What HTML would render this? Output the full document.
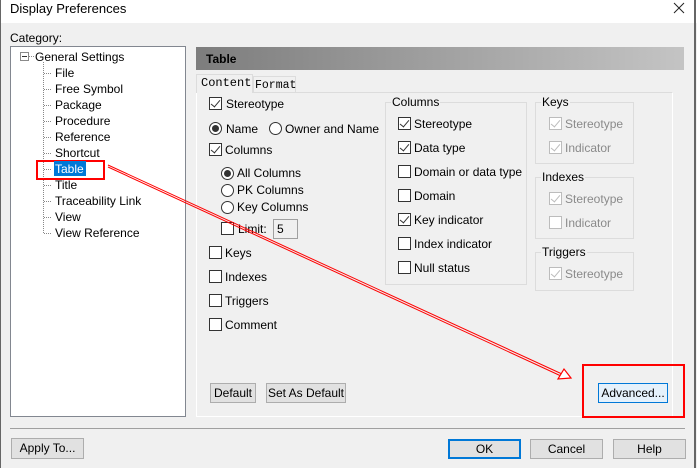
<!DOCTYPE html>
<html><head><meta charset="utf-8"><style>
*{margin:0;padding:0;box-sizing:border-box}
body{width:697px;height:468px;background:#f0f0f0;font-family:"Liberation Sans",sans-serif;font-size:12px;color:#000;position:relative;overflow:hidden}
.a{position:absolute;white-space:nowrap}
.cb{position:absolute;width:13px;height:13px;border:1px solid #333;background:#fff}
.cb.c::after{content:"";position:absolute;left:3px;top:0px;width:4px;height:8px;border:solid #333;border-width:0 1px 1px 0;transform:rotate(40deg)}
.cb.d{border-color:#bcbcbc}
.cb.d.c::after{border-color:#bcbcbc}
.rb{position:absolute;width:13px;height:13px;border:1px solid #333;border-radius:50%;background:#fff}
.rb.c::after{content:"";position:absolute;left:2px;top:2px;width:7px;height:7px;border-radius:50%;background:#333}
.g{color:#8a8a8a}
.btn{position:absolute;border:1px solid #adadad;background:#e1e1e1;text-align:center;line-height:18px}
.grp{position:absolute;border:1px solid #dcdcdc}
.gl{position:absolute;background:#f0f0f0;padding:0 1px;top:-8px;left:5px}
.t{position:absolute;left:55px}
</style></head><body>
<div class="a" style="left:0;top:0;width:697px;height:23px;background:#fff"></div>
<div class="a" style="left:0;top:0;width:1px;height:468px;background:#666"></div>
<div class="a" style="left:694px;top:0;width:2px;height:468px;background:#666"></div>
<div class="a" style="left:10px;top:1px;font-size:13px">Display Preferences</div>
<svg class="a" style="left:673px;top:2px" width="12" height="12"><path d="M1 1L11 11M11 1L1 11" stroke="#222" stroke-width="1"/></svg>
<div class="a" style="left:10px;top:31px">Category:</div>
<div class="a" style="left:10px;top:46px;width:176px;height:371px;background:#fff;border:1px solid #828790"></div>
<div class="a" style="left:20px;top:52px;width:9px;height:9px;border:1px solid #8a8a8a;background:#fff"></div>
<div class="a" style="left:22px;top:56px;width:5px;height:1px;background:#333"></div>
<div class="a" style="left:29px;top:56px;width:5px;border-top:1px dotted #888"></div>
<div class="a" style="left:43px;top:62px;height:171px;border-left:1px dotted #888"></div>
<div class="a" style="left:35px;top:50px">General Settings</div>
<div class="a" style="left:196px;top:47px;width:488px;height:23px;background:linear-gradient(90deg,#7d7d7d,#c4c4c4)"></div>
<div class="a" style="left:206px;top:52px;font-weight:bold">Table</div>
<div class="a" style="left:196px;top:92px;width:477px;height:325px;border:1px solid #fff;border-top-color:#dcdcdc"></div>
<div class="a" style="left:196px;top:74px;width:57px;height:19px;background:#f0f0f0;border:1px solid #dcdcdc;border-bottom:none"></div>
<div class="a" style="left:201px;top:76px;font-family:'Liberation Mono',monospace;font-size:12px">Content</div>
<div class="a" style="left:253px;top:76px;width:43px;height:16px;border:1px solid #dcdcdc;border-bottom:none"></div>
<div class="a" style="left:255px;top:79px;font-family:'Liberation Mono',monospace;font-size:11.5px">Format</div>

<div class="cb c" style="left:209px;top:97px"></div><div class="a" style="left:226px;top:97px">Stereotype</div>
<div class="rb c" style="left:209px;top:122px"></div><div class="a" style="left:226px;top:122px">Name</div>
<div class="rb" style="left:269px;top:122px"></div><div class="a" style="left:285px;top:122px">Owner and Name</div>
<div class="cb c" style="left:209px;top:143px"></div><div class="a" style="left:225px;top:143px">Columns</div>
<div class="rb c" style="left:221px;top:167px"></div><div class="a" style="left:237px;top:166px">All Columns</div>
<div class="rb" style="left:221px;top:184px"></div><div class="a" style="left:237px;top:183px">PK Columns</div>
<div class="rb" style="left:221px;top:201px"></div><div class="a" style="left:237px;top:200px">Key Columns</div>
<div class="cb" style="left:221px;top:222px"></div><div class="a" style="left:238px;top:222px">Limit:</div>
<div class="a" style="left:273px;top:219px;width:25px;height:20px;border:1px solid #a0a0a0;padding:2px 3px">5</div>
<div class="cb" style="left:209px;top:246px"></div><div class="a" style="left:225px;top:246px">Keys</div>
<div class="cb" style="left:209px;top:270px"></div><div class="a" style="left:225px;top:270px">Indexes</div>
<div class="cb" style="left:209px;top:294px"></div><div class="a" style="left:225px;top:294px">Triggers</div>
<div class="cb" style="left:209px;top:318px"></div><div class="a" style="left:225px;top:318px">Comment</div>

<div class="grp" style="left:385px;top:102px;width:142px;height:183px"><span class="gl">Columns</span></div>
<div class="cb c" style="left:398px;top:117px"></div><div class="a" style="left:414px;top:117px">Stereotype</div>
<div class="cb c" style="left:398px;top:141px"></div><div class="a" style="left:414px;top:141px">Data type</div>
<div class="cb" style="left:398px;top:165px"></div><div class="a" style="left:414px;top:165px">Domain or data type</div>
<div class="cb" style="left:398px;top:189px"></div><div class="a" style="left:414px;top:189px">Domain</div>
<div class="cb c" style="left:398px;top:213px"></div><div class="a" style="left:414px;top:213px">Key indicator</div>
<div class="cb" style="left:398px;top:237px"></div><div class="a" style="left:414px;top:237px">Index indicator</div>
<div class="cb" style="left:398px;top:261px"></div><div class="a" style="left:414px;top:261px">Null status</div>

<div class="grp" style="left:535px;top:102px;width:99px;height:62px"><span class="gl">Keys</span></div>
<div class="cb c d" style="left:549px;top:117px"></div><div class="a g" style="left:565px;top:117px">Stereotype</div>
<div class="cb c d" style="left:549px;top:141px"></div><div class="a g" style="left:565px;top:141px">Indicator</div>
<div class="grp" style="left:535px;top:177px;width:99px;height:62px"><span class="gl">Indexes</span></div>
<div class="cb c d" style="left:549px;top:192px"></div><div class="a g" style="left:565px;top:192px">Stereotype</div>
<div class="cb d" style="left:549px;top:216px"></div><div class="a g" style="left:565px;top:216px">Indicator</div>
<div class="grp" style="left:535px;top:252px;width:99px;height:39px"><span class="gl">Triggers</span></div>
<div class="cb c d" style="left:549px;top:267px"></div><div class="a g" style="left:565px;top:267px">Stereotype</div>

<div class="btn" style="left:210px;top:383px;width:46px;height:20px">Default</div>
<div class="btn" style="left:266px;top:383px;width:80px;height:20px">Set As Default</div>
<div class="btn" style="left:598px;top:383px;width:70px;height:20px;background:#e5f1fb;border-color:#0078d7">Advanced...</div>

<div class="a" style="left:10px;top:428px;width:675px;height:1px;background:#a0a0a0"></div>
<div class="btn" style="left:11px;top:438px;width:73px;height:21px;line-height:19px">Apply To...</div>
<div class="btn" style="left:448px;top:439px;width:73px;height:20px;border:2px solid #0078d7;line-height:16px">OK</div>
<div class="btn" style="left:530px;top:439px;width:73px;height:20px">Cancel</div>
<div class="btn" style="left:613px;top:439px;width:73px;height:20px">Help</div>

<div class="a" style="left:36px;top:160px;width:69px;height:20px;border:2px solid #f00"></div>
<div class="a" style="left:582px;top:364px;width:103px;height:54px;border:2px solid #f00"></div>
<svg class="a" style="left:0;top:0" width="697" height="468">
<line x1="108" y1="165" x2="562" y2="374" stroke="#f00" stroke-width="1"/>
<line x1="108" y1="167" x2="561" y2="376" stroke="#f00" stroke-width="1"/>
<polygon points="571,378 558,379 564,369" fill="#fff" stroke="#f00" stroke-width="1.2"/>
</svg>
<div class="a" style="left:54px;top:161px;width:32px;height:15px;background:#0078d7"></div>
<div class="t a" style="top:66px">File</div>
<div class="t a" style="top:82px">Free Symbol</div>
<div class="t a" style="top:98px">Package</div>
<div class="t a" style="top:114px">Procedure</div>
<div class="t a" style="top:130px">Reference</div>
<div class="t a" style="top:146px">Shortcut</div>
<div class="t a" style="top:162px;color:#fff">Table</div>
<div class="t a" style="top:178px">Title</div>
<div class="t a" style="top:194px">Traceability Link</div>
<div class="t a" style="top:210px">View</div>
<div class="t a" style="top:226px">View Reference</div>
<svg class="a" style="left:0;top:0" width="60" height="240">
<g stroke="#888" stroke-dasharray="1 1">
<line x1="44" y1="73.5" x2="52" y2="73.5"/><line x1="44" y1="89.5" x2="52" y2="89.5"/><line x1="44" y1="105.5" x2="52" y2="105.5"/><line x1="44" y1="121.5" x2="52" y2="121.5"/><line x1="44" y1="137.5" x2="52" y2="137.5"/><line x1="44" y1="153.5" x2="52" y2="153.5"/><line x1="44" y1="169.5" x2="52" y2="169.5"/><line x1="44" y1="185.5" x2="52" y2="185.5"/><line x1="44" y1="201.5" x2="52" y2="201.5"/><line x1="44" y1="217.5" x2="52" y2="217.5"/><line x1="44" y1="233.5" x2="52" y2="233.5"/>
</g></svg>
</body></html>
